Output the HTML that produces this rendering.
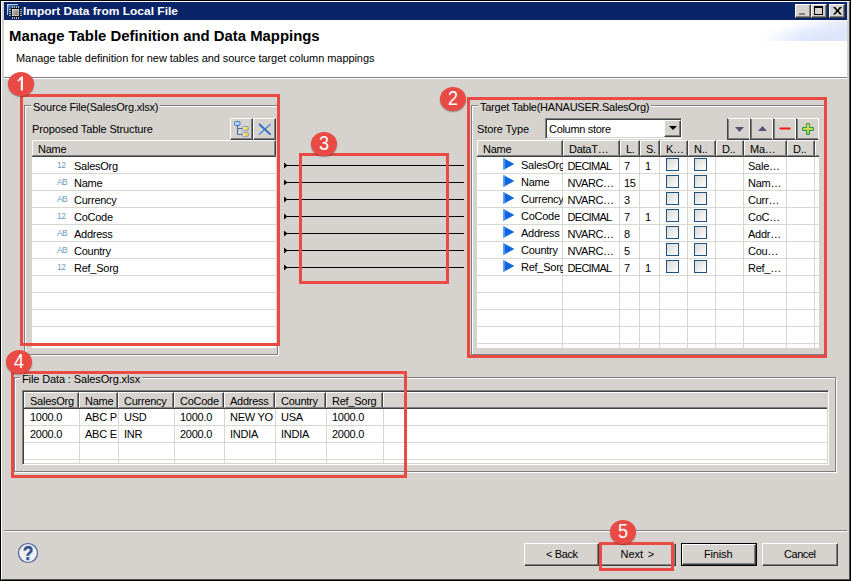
<!DOCTYPE html>
<html><head><meta charset="utf-8"><title>Import Data from Local File</title>
<style>
*{box-sizing:border-box;margin:0;padding:0}
html,body{width:851px;height:581px;overflow:hidden;background:#d6d3ce}
body{position:relative;font-family:"Liberation Sans",sans-serif;font-size:11px;color:#000;line-height:13px}
.a{position:absolute}
.t{position:absolute;white-space:nowrap;line-height:13px;height:13px;letter-spacing:-0.250px}
.red{position:absolute;border:3px solid #e94a44}
.circ{position:absolute;width:26px;height:24px;border-radius:50%;background:#e94a44;color:#fff;font-size:20px;line-height:23px;text-align:center;box-shadow:0 1px 1.500px rgba(60,40,40,.45)}
.circ b{display:block;font-weight:normal;transform:scaleX(.9)}
.grp{position:absolute;border:1px solid #808080;box-shadow:1px 1px 0 #fff, inset 1px 1px 0 #fff}
.gl{position:absolute;background:#d6d3ce;white-space:nowrap;line-height:13px;height:13px}
.btn{position:absolute;background:#d6d3ce;border:1px solid;border-color:#fff #404040 #404040 #fff;box-shadow:inset -1px -1px 0 #808080}
.hd{position:absolute;top:0;height:16px;background:#d6d3ce;border:1px solid;border-color:#fff #404040 #808080 #fff;box-shadow:0 1px 0 #404040, inset -1px 0 0 #808080;line-height:13px;padding:2px 0 0 5px;white-space:nowrap;overflow:hidden;letter-spacing:-0.250px}
.hl{position:absolute;left:0;right:0;height:1px;background:#d9d7d2}
.vl{position:absolute;top:0;bottom:0;width:1px;background:#d9d7d2}
.cb{position:absolute;width:13px;height:13px;border:1px solid #1c5180;background:linear-gradient(135deg,#d8d8d4,#fff)}
</style></head><body>
<div class="a" style="left:0;top:0;width:851px;height:581px;border:1px solid #000"></div>
<div class="a" style="left:1px;top:1px;width:849px;height:579px;border:1px solid #fff;border-right-color:#505050;border-bottom-color:#505050"></div>
<div class="a" style="left:4px;top:2px;width:843px;height:18px;background:#0a246a"></div>
<svg class="a" style="left:7px;top:4px" width="16" height="16" viewBox="0 0 16 16">
<defs><linearGradient id="ig" x1="0" y1="0" x2="1" y2="1"><stop offset="0" stop-color="#9cc8f0"/><stop offset=".6" stop-color="#1b4a8f" stop-opacity=".2"/><stop offset="1" stop-color="#0a246a" stop-opacity="0"/></linearGradient>
<linearGradient id="cg" x1="0" y1="0" x2="1" y2="1"><stop offset="0" stop-color="#c8c8c8"/><stop offset="1" stop-color="#6e6e6e"/></linearGradient></defs>
<rect x="0" y="0" width="11" height="11" fill="url(#ig)"/>
<path d="M0.500 11V0.500H11" fill="none" stroke="#a8d0f4" stroke-width="1"/>
<g fill="#b9b9a0"><rect x="5" y="2" width="1" height="2"/><rect x="7" y="2" width="1" height="2"/><rect x="9" y="2" width="1" height="2"/><rect x="11" y="2" width="1" height="2"/>
<rect x="5" y="13" width="1" height="2"/><rect x="7" y="13" width="1" height="2"/><rect x="9" y="13" width="1" height="2"/><rect x="11" y="13" width="1" height="2"/>
<rect x="2" y="5" width="2" height="1"/><rect x="2" y="7" width="2" height="1"/><rect x="2" y="9" width="2" height="1"/><rect x="2" y="11" width="2" height="1"/>
<rect x="13" y="5" width="2" height="1"/><rect x="13" y="7" width="2" height="1"/><rect x="13" y="9" width="2" height="1"/><rect x="13" y="11" width="2" height="1"/></g>
<rect x="4" y="4" width="9" height="9" fill="#111"/>
<rect x="5" y="5" width="7" height="7" fill="url(#cg)"/>
<rect x="5.500" y="5.500" width="6" height="6" fill="none" stroke="#d8d8d8" stroke-width="1" opacity=".7"/>
</svg>
<div class="t" style="left:23px;top:5px;color:#fff;font-weight:bold;letter-spacing:0;transform-origin:0 0;transform:scaleX(1.088)">Import Data from Local File</div>
<div class="btn" style="left:795px;top:4px;width:16px;height:14px"><div class="a" style="left:3px;top:8px;width:6px;height:2px;background:#808080"></div></div>
<div class="btn" style="left:811px;top:4px;width:16px;height:14px"><div class="a" style="left:2px;top:1px;width:9px;height:9px;border:1px solid #000;border-top-width:2px"></div></div>
<div class="btn" style="left:829px;top:4px;width:16px;height:14px"><svg class="a" style="left:2.500px;top:2px" width="9" height="7.500" viewBox="0 0 8 7" preserveAspectRatio="none"><path d="M0 0h2l2 2.500L6 0h2L5 3.500 8 7H6L4 4.500 2 7H0l3-3.500z" fill="#000"/></svg></div>
<div class="a" style="left:4px;top:20px;width:843px;height:57px;background:#fff"></div>
<div class="a" style="left:750px;top:20px;width:97px;height:21px;background:linear-gradient(90deg,#fff 8%,rgba(255,255,255,0) 55%),linear-gradient(to bottom right,#fff 30%,#e6ecfd 55%,#dde5fb 80%)"></div>
<div class="a" style="left:4px;top:77px;width:843px;height:1px;background:#808080"></div>
<div class="a" style="left:4px;top:78px;width:843px;height:1px;background:#fff"></div>
<div class="t" style="left:9px;top:28px;font-size:14px;font-weight:bold;line-height:16px;height:16px;letter-spacing:0;transform-origin:0 0;transform:scaleX(1.063)">Manage Table Definition and Data Mappings</div>
<div class="t" style="left:16px;top:52px;letter-spacing:-0.067px">Manage table definition for new tables and source target column mappings</div>
<div class="grp" style="left:24px;top:105px;width:254px;height:250px"></div>
<div class="gl" style="left:31px;top:101px;width:129px;padding-left:2px;letter-spacing:-0.213px">Source File(SalesOrg.xlsx)</div>
<div class="t" style="left:32px;top:123px;letter-spacing:-0.128px">Proposed Table Structure</div>
<div class="btn" style="left:230px;top:118px;width:23px;height:22px">
<svg class="a" style="left:3px;top:2px" width="16" height="17" viewBox="0 0 16 17"><defs><linearGradient id="yg" x1="0" y1="0" x2="1" y2="0"><stop offset="0" stop-color="#fff6a0"/><stop offset="1" stop-color="#ffd010"/></linearGradient><linearGradient id="bg" x1="0" y1="0" x2="1" y2="1"><stop offset="0" stop-color="#d0e8ff"/><stop offset="1" stop-color="#90c0f8"/></linearGradient></defs><path d="M3.500 5v8.500h5M3.500 7.500h5" fill="none" stroke="#4a68a8" stroke-width="1"/><rect x="0.500" y="0.500" width="5.500" height="4" rx="1" fill="url(#bg)" stroke="#4a7ad0"/><rect x="8.500" y="5.600" width="5.800" height="3.700" rx=".8" fill="url(#yg)" stroke="#7898d8"/><rect x="8.500" y="11.600" width="5.800" height="3.700" rx=".8" fill="url(#yg)" stroke="#7898d8"/></svg></div>
<div class="btn" style="left:253px;top:118px;width:23px;height:22px">
<svg class="a" style="left:4px;top:4px" width="14" height="13" viewBox="0 0 14 13"><path d="M12.600 1L1 11.600" stroke="#4a88d8" stroke-width="1.400" fill="none"/><path d="M1 1L12.600 11.600" stroke="#2c6cc4" stroke-width="1.900" fill="none"/></svg></div>
<div class="a" style="left:32px;top:140px;width:244px;height:208px;background:#fff;overflow:hidden">
<div class="hd" style="left:0;width:244px">Name</div>
<div class="hl" style="top:33px"></div><div class="hl" style="top:50px"></div><div class="hl" style="top:67px"></div><div class="hl" style="top:84px"></div><div class="hl" style="top:101px"></div><div class="hl" style="top:118px"></div><div class="hl" style="top:135px"></div><div class="hl" style="top:152px"></div><div class="hl" style="top:169px"></div><div class="hl" style="top:186px"></div><div class="hl" style="top:203px"></div>
<div class="t" style="left:25px;top:18.5px;font-size:8.500px;color:#6a9cbe;letter-spacing:-0.600px">12</div><div class="t" style="left:42px;top:20px">SalesOrg</div>
<div class="t" style="left:25px;top:35.5px;font-size:8.500px;color:#6a9cbe;letter-spacing:-0.600px">AB</div><div class="t" style="left:42px;top:37px">Name</div>
<div class="t" style="left:25px;top:52.5px;font-size:8.500px;color:#6a9cbe;letter-spacing:-0.600px">AB</div><div class="t" style="left:42px;top:54px">Currency</div>
<div class="t" style="left:25px;top:69.5px;font-size:8.500px;color:#6a9cbe;letter-spacing:-0.600px">12</div><div class="t" style="left:42px;top:71px">CoCode</div>
<div class="t" style="left:25px;top:86.5px;font-size:8.500px;color:#6a9cbe;letter-spacing:-0.600px">AB</div><div class="t" style="left:42px;top:88px">Address</div>
<div class="t" style="left:25px;top:103.5px;font-size:8.500px;color:#6a9cbe;letter-spacing:-0.600px">AB</div><div class="t" style="left:42px;top:105px">Country</div>
<div class="t" style="left:25px;top:120.5px;font-size:8.500px;color:#6a9cbe;letter-spacing:-0.600px">12</div><div class="t" style="left:42px;top:122px">Ref_Sorg</div>
</div>
<svg class="a" style="left:280px;top:155px" width="190" height="125" viewBox="0 0 190 125"><path d="M4 10.5H184" stroke="#000" stroke-width="1.200"/><path d="M4 7.5l3.500 3-3.500 3z" fill="#000"/><path d="M4 27.5H184" stroke="#000" stroke-width="1.200"/><path d="M4 24.5l3.500 3-3.500 3z" fill="#000"/><path d="M4 44.5H184" stroke="#000" stroke-width="1.200"/><path d="M4 41.5l3.500 3-3.500 3z" fill="#000"/><path d="M4 61.5H184" stroke="#000" stroke-width="1.200"/><path d="M4 58.5l3.500 3-3.500 3z" fill="#000"/><path d="M4 78.5H184" stroke="#000" stroke-width="1.200"/><path d="M4 75.5l3.500 3-3.500 3z" fill="#000"/><path d="M4 95.5H184" stroke="#000" stroke-width="1.200"/><path d="M4 92.5l3.500 3-3.500 3z" fill="#000"/><path d="M4 112.5H184" stroke="#000" stroke-width="1.200"/><path d="M4 109.5l3.500 3-3.500 3z" fill="#000"/></svg>
<div class="grp" style="left:471px;top:105px;width:354px;height:250px"></div>
<div class="gl" style="left:478px;top:101px;width:173px;padding-left:2px;letter-spacing:-0.253px">Target Table(HANAUSER.SalesOrg)</div>
<div class="t" style="left:477px;top:123px;letter-spacing:-0.100px">Store Type</div>
<div class="a" style="left:545px;top:118px;width:137px;height:21px;background:#fff;border:1px solid;border-color:#808080 #fff #fff #808080;box-shadow:inset 1px 1px 0 #404040, inset -1px -1px 0 #d6d3ce">
<div class="t" style="left:3px;top:4px;letter-spacing:-0.311px">Column store</div>
<div class="btn" style="left:118px;top:1px;width:17px;height:17px"><div class="a" style="left:4px;top:5px;width:0;height:0;border:4px solid transparent;border-top:4px solid #000;border-bottom:0"></div></div>
</div>
<div class="btn" style="left:727px;top:118px;width:23px;height:22px;border-color:#fff #fff #404040 #404040;box-shadow:inset 1px -1px 0 #808080"><svg class="a" style="left:0;top:0" width="21" height="20" viewBox="0 0 21 20"><path d="M7 8h9l-4.500 5z" fill="#545478"/></svg></div>
<div class="btn" style="left:750px;top:118px;width:23px;height:22px;border-color:#fff #fff #404040 #404040;box-shadow:inset 1px -1px 0 #808080"><svg class="a" style="left:0;top:0" width="21" height="20" viewBox="0 0 21 20"><path d="M7 12h9l-4.500-5z" fill="#545478"/></svg></div>
<div class="btn" style="left:773px;top:118px;width:23px;height:22px;border-color:#fff #fff #404040 #404040;box-shadow:inset 1px -1px 0 #808080"><svg class="a" style="left:0;top:0" width="21" height="20" viewBox="0 0 21 20"><rect x="5.500" y="8.500" width="11" height="2" fill="#f01818"/></svg></div>
<div class="btn" style="left:796px;top:118px;width:23px;height:22px;border-color:#fff #fff #404040 #404040;box-shadow:inset 1px -1px 0 #808080"><svg class="a" style="left:0;top:0" width="21" height="20" viewBox="0 0 21 20"><defs><linearGradient id="pg" x1="0" y1="0" x2="0" y2="1"><stop offset="0" stop-color="#f0e840"/><stop offset=".5" stop-color="#c4d850"/><stop offset="1" stop-color="#98c050"/></linearGradient></defs><path d="M9.500 4.500h3v4h4v3h-4v4h-3v-4h-4v-3h4z" fill="url(#pg)" stroke="#30984c" stroke-width="1"/></svg></div>
<div class="a" style="left:477px;top:140px;width:342px;height:208px;background:#fff;overflow:hidden">
<div class="hd" style="left:0px;width:86px;">Name</div><div class="hd" style="left:86px;width:57px;">DataT…</div><div class="hd" style="left:143px;width:20px;">L.</div><div class="hd" style="left:163px;width:20px;">S.</div><div class="hd" style="left:183px;width:28px;">K…</div><div class="hd" style="left:211px;width:28px;">N..</div><div class="hd" style="left:239px;width:28px;">D..</div><div class="hd" style="left:267px;width:43px;">Ma…</div><div class="hd" style="left:310px;width:28px;">D..</div><div class="hd" style="left:338px;width:12px;"></div>
<div class="hl" style="top:33px"></div><div class="hl" style="top:50px"></div><div class="hl" style="top:67px"></div><div class="hl" style="top:84px"></div><div class="hl" style="top:101px"></div><div class="hl" style="top:118px"></div><div class="hl" style="top:135px"></div><div class="hl" style="top:152px"></div><div class="hl" style="top:169px"></div><div class="hl" style="top:186px"></div><div class="hl" style="top:203px"></div><div class="vl" style="left:85px;top:17px"></div><div class="vl" style="left:142px;top:17px"></div><div class="vl" style="left:162px;top:17px"></div><div class="vl" style="left:182px;top:17px"></div><div class="vl" style="left:210px;top:17px"></div><div class="vl" style="left:238px;top:17px"></div><div class="vl" style="left:266px;top:17px"></div><div class="vl" style="left:309px;top:17px"></div><div class="vl" style="left:337px;top:17px"></div>
<svg class="a" style="left:26px;top:18px" width="12" height="12" viewBox="0 0 12 12"><path d="M0.300 0v12l11-6z" fill="#0f66de"/><path d="M1 0.300v11.400" stroke="#6aa8f4" stroke-width="1.400"/></svg><div class="t" style="left:44px;top:19px;width:42px;overflow:hidden">SalesOrg</div><div class="t" style="left:90.500px;top:20px;letter-spacing:-0.700px">DECIMAL</div><div class="t" style="left:147px;top:20px">7</div><div class="t" style="left:168px;top:20px">1</div><div class="cb" style="left:189px;top:18px"></div><div class="cb" style="left:217px;top:18px"></div><div class="t" style="left:271px;top:20px">Sale…</div>
<svg class="a" style="left:26px;top:35px" width="12" height="12" viewBox="0 0 12 12"><path d="M0.300 0v12l11-6z" fill="#0f66de"/><path d="M1 0.300v11.400" stroke="#6aa8f4" stroke-width="1.400"/></svg><div class="t" style="left:44px;top:36px;width:42px;overflow:hidden">Name</div><div class="t" style="left:90.500px;top:37px;letter-spacing:-0.450px">NVARC…</div><div class="t" style="left:147px;top:37px">15</div><div class="cb" style="left:189px;top:35px"></div><div class="cb" style="left:217px;top:35px"></div><div class="t" style="left:271px;top:37px">Nam…</div>
<svg class="a" style="left:26px;top:52px" width="12" height="12" viewBox="0 0 12 12"><path d="M0.300 0v12l11-6z" fill="#0f66de"/><path d="M1 0.300v11.400" stroke="#6aa8f4" stroke-width="1.400"/></svg><div class="t" style="left:44px;top:53px;width:42px;overflow:hidden">Currency</div><div class="t" style="left:90.500px;top:54px;letter-spacing:-0.450px">NVARC…</div><div class="t" style="left:147px;top:54px">3</div><div class="cb" style="left:189px;top:52px"></div><div class="cb" style="left:217px;top:52px"></div><div class="t" style="left:271px;top:54px">Curr…</div>
<svg class="a" style="left:26px;top:69px" width="12" height="12" viewBox="0 0 12 12"><path d="M0.300 0v12l11-6z" fill="#0f66de"/><path d="M1 0.300v11.400" stroke="#6aa8f4" stroke-width="1.400"/></svg><div class="t" style="left:44px;top:70px;width:42px;overflow:hidden">CoCode</div><div class="t" style="left:90.500px;top:71px;letter-spacing:-0.700px">DECIMAL</div><div class="t" style="left:147px;top:71px">7</div><div class="t" style="left:168px;top:71px">1</div><div class="cb" style="left:189px;top:69px"></div><div class="cb" style="left:217px;top:69px"></div><div class="t" style="left:271px;top:71px">CoC…</div>
<svg class="a" style="left:26px;top:86px" width="12" height="12" viewBox="0 0 12 12"><path d="M0.300 0v12l11-6z" fill="#0f66de"/><path d="M1 0.300v11.400" stroke="#6aa8f4" stroke-width="1.400"/></svg><div class="t" style="left:44px;top:87px;width:42px;overflow:hidden">Address</div><div class="t" style="left:90.500px;top:88px;letter-spacing:-0.450px">NVARC…</div><div class="t" style="left:147px;top:88px">8</div><div class="cb" style="left:189px;top:86px"></div><div class="cb" style="left:217px;top:86px"></div><div class="t" style="left:271px;top:88px">Addr…</div>
<svg class="a" style="left:26px;top:103px" width="12" height="12" viewBox="0 0 12 12"><path d="M0.300 0v12l11-6z" fill="#0f66de"/><path d="M1 0.300v11.400" stroke="#6aa8f4" stroke-width="1.400"/></svg><div class="t" style="left:44px;top:104px;width:42px;overflow:hidden">Country</div><div class="t" style="left:90.500px;top:105px;letter-spacing:-0.450px">NVARC…</div><div class="t" style="left:147px;top:105px">5</div><div class="cb" style="left:189px;top:103px"></div><div class="cb" style="left:217px;top:103px"></div><div class="t" style="left:271px;top:105px">Cou…</div>
<svg class="a" style="left:26px;top:120px" width="12" height="12" viewBox="0 0 12 12"><path d="M0.300 0v12l11-6z" fill="#0f66de"/><path d="M1 0.300v11.400" stroke="#6aa8f4" stroke-width="1.400"/></svg><div class="t" style="left:44px;top:121px;width:42px;overflow:hidden">Ref_Sorg</div><div class="t" style="left:90.500px;top:122px;letter-spacing:-0.700px">DECIMAL</div><div class="t" style="left:147px;top:122px">7</div><div class="t" style="left:168px;top:122px">1</div><div class="cb" style="left:189px;top:120px"></div><div class="cb" style="left:217px;top:120px"></div><div class="t" style="left:271px;top:122px">Ref_…</div>
</div>
<div class="grp" style="left:14px;top:377px;width:822px;height:95px"></div>
<div class="gl" style="left:20px;top:373px;width:122px;padding-left:2px;letter-spacing:-0.120px">File Data : SalesOrg.xlsx</div>
<div class="a" style="left:22px;top:390px;width:807px;height:75px;background:#fff;border:1px solid;border-color:#808080 #fff #fff #808080;box-shadow:inset 1px 1px 0 #404040, inset -1px -1px 0 #d6d3ce;overflow:hidden">
<div class="a" style="left:1px;top:1px;width:803px;height:16px;background:#d6d3ce;box-shadow:0 1px 0 #404040;border-bottom:1px solid #808080;border-top:1px solid #fff"></div>
<div class="a" style="left:360px;top:1px;width:1px;height:15px;background:#fff"></div>
<div class="hd" style="left:1px;top:1px;width:55px">SalesOrg</div><div class="hd" style="left:56px;top:1px;width:39px">Name</div><div class="hd" style="left:95px;top:1px;width:56px">Currency</div><div class="hd" style="left:151px;top:1px;width:50px">CoCode</div><div class="hd" style="left:201px;top:1px;width:51px">Address</div><div class="hd" style="left:252px;top:1px;width:51px">Country</div><div class="hd" style="left:303px;top:1px;width:57px">Ref_Sorg</div>
<div class="hl" style="top:34px;left:1px;right:1px"></div><div class="hl" style="top:51px;left:1px;right:1px"></div><div class="hl" style="top:68px;left:1px;right:1px"></div><div class="vl" style="left:56px;top:18px;bottom:1px"></div><div class="vl" style="left:95px;top:18px;bottom:1px"></div><div class="vl" style="left:151px;top:18px;bottom:1px"></div><div class="vl" style="left:201px;top:18px;bottom:1px"></div><div class="vl" style="left:252px;top:18px;bottom:1px"></div><div class="vl" style="left:303px;top:18px;bottom:1px"></div><div class="vl" style="left:360px;top:18px;bottom:1px"></div>
<div class="t" style="left:7px;top:20px">1000.0</div><div class="t" style="left:62px;top:20px">ABC P</div><div class="t" style="left:101px;top:20px">USD</div><div class="t" style="left:157px;top:20px">1000.0</div><div class="t" style="left:207px;top:20px">NEW YO</div><div class="t" style="left:258px;top:20px">USA</div><div class="t" style="left:309px;top:20px">1000.0</div>
<div class="t" style="left:7px;top:37px">2000.0</div><div class="t" style="left:62px;top:37px">ABC E</div><div class="t" style="left:101px;top:37px">INR</div><div class="t" style="left:157px;top:37px">2000.0</div><div class="t" style="left:207px;top:37px">INDIA</div><div class="t" style="left:258px;top:37px">INDIA</div><div class="t" style="left:309px;top:37px">2000.0</div>
</div>
<div class="a" style="left:4px;top:530px;width:843px;height:1px;background:#808080"></div>
<div class="a" style="left:4px;top:531px;width:843px;height:1px;background:#fff"></div>
<svg class="a" style="left:17px;top:542px" width="22" height="22" viewBox="0 0 22 22"><circle cx="11" cy="11" r="9.500" fill="#eef0f6" stroke="#4a6298" stroke-width="1.200"/><text x="12.600" y="18" text-anchor="middle" font-family="Liberation Sans" font-size="20" font-weight="bold" fill="#38548c" stroke="#38548c" stroke-width=".4" transform="scale(.87 1)">?</text></svg>
<div class="btn" style="left:524px;top:543px;width:75px;height:23px"><div class="t" style="left:21px;top:4px;letter-spacing:-0.388px">&lt; Back</div></div>
<div class="btn" style="left:600px;top:543px;width:76px;height:23px"><div class="t" style="left:19.500px;top:4px;letter-spacing:0;word-spacing:1.500px">Next &gt;</div></div>
<div class="a" style="left:681px;top:543px;width:76px;height:23px;border:1px solid #000"><div class="btn" style="left:0;top:0;width:74px;height:21px"><div class="t" style="left:21px;top:3px;letter-spacing:-0.150px">Finish</div></div></div>
<div class="btn" style="left:762px;top:543px;width:76px;height:23px"><div class="t" style="left:21px;top:4px;letter-spacing:-0.450px">Cancel</div></div>
<div class="red" style="left:20px;top:94px;width:260px;height:252px"></div>
<div class="red" style="left:467px;top:97px;width:360px;height:261px"></div>
<div class="red" style="left:299px;top:153px;width:150px;height:131px"></div>
<div class="red" style="left:11px;top:371px;width:396px;height:107px"></div>
<div class="red" style="left:599px;top:542px;width:75px;height:29px"></div>
<div class="circ" style="left:8px;top:71.500px"><svg class="a" style="left:0;top:0" width="26" height="24" viewBox="0 0 26 24"><path d="M9.300 8.700L13.200 4.600H14.900V18.500H12.800V7.200L10.300 9.800z" fill="#fff"/></svg></div>
<div class="circ" style="left:440px;top:86.500px"><b>2</b></div>
<div class="circ" style="left:311px;top:131.500px"><b>3</b></div>
<div class="circ" style="left:6px;top:350px"><b>4</b></div>
<div class="circ" style="left:610px;top:520px"><b>5</b></div>
</body></html>
